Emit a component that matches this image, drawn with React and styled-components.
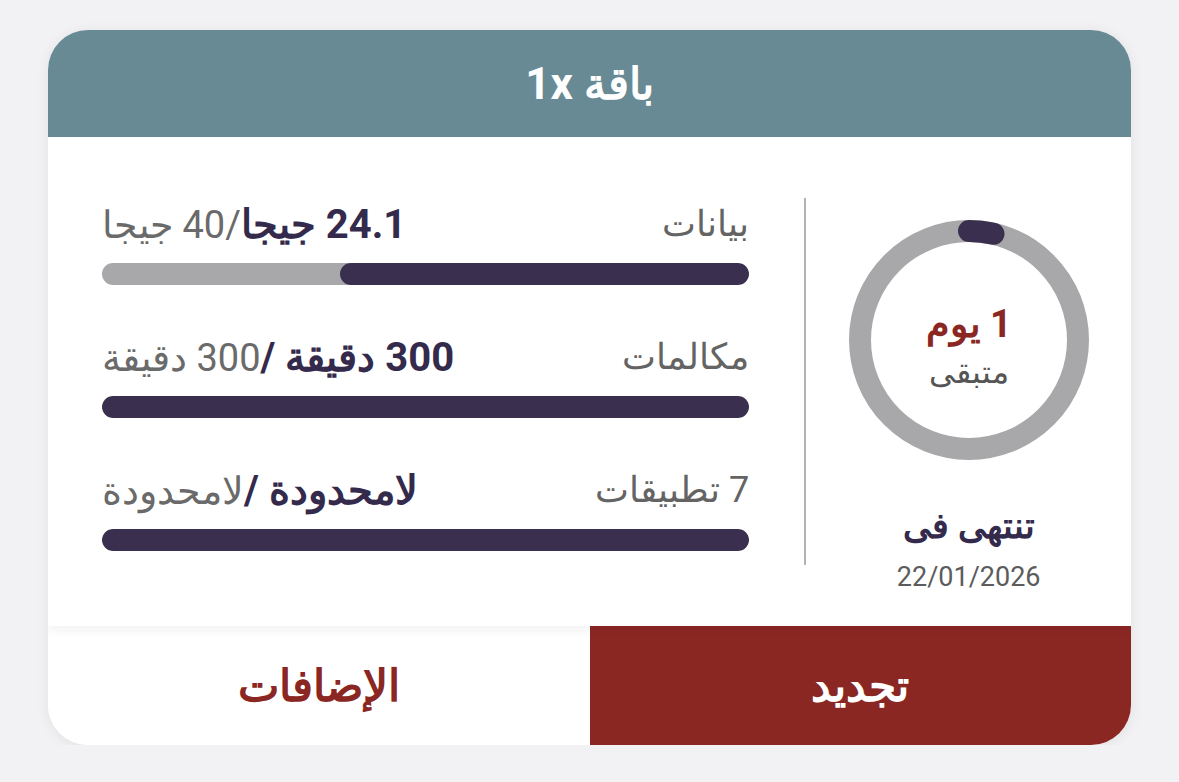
import React from 'react';
import styled, { createGlobalStyle } from 'styled-components';

const GlobalStyle = createGlobalStyle`
  body {
    margin: 0;
    background: #f2f2f5;
    font-family: "Roboto", sans-serif;
  }
`;

const Card = styled.div`
  margin: 30px 48px 0;
  width: 1083px;
  border-radius: 40px;
  overflow: hidden;
  background: #fff;
  box-shadow: 0 2px 14px rgba(0, 0, 0, 0.07);
`;

const Header = styled.div`
  height: 107px;
  background: #678a94;
  color: #fff;
  display: flex;
  align-items: center;
  justify-content: center;
  font-size: 44px;
  font-weight: 700;
`;

const Body = styled.div`
  position: relative;
  z-index: 1;
  height: 489px;
  box-sizing: border-box;
  padding: 61px 0 0 54px;
  display: flex;
  align-items: flex-start;
  background: #fff;
  box-shadow: 0 5px 10px rgba(0, 0, 0, 0.05);
`;

const Side = styled.div`
  width: 325px;
  display: flex;
  flex-direction: column;
  align-items: center;
  padding-top: 22px;
`;

const Divider = styled.div`
  width: 2px;
  height: 367px;
  background: #b3b3b3;
`;

const Usage = styled.div`
  width: 648px;
  margin-right: 55px;
  padding-top: 6px;
  display: flex;
  flex-direction: column;
  gap: 52px;
`;

const Row = styled.div`
  display: flex;
  flex-direction: column;
  gap: 19px;
`;

const RowText = styled.div`
  height: 40px;
  display: flex;
  align-items: center;
  justify-content: space-between;
  font-size: 36px;
  color: #646464;
  white-space: nowrap;
`;

const Amount = styled.span`
  color: #6a6a6a;
  font-size: 38px;
`;

const Strong = styled.b`
  color: #342a4c;
  font-weight: 700;
  font-size: 40px;
`;

const Track = styled.div`
  height: 22px;
  border-radius: 11px;
  background: #a8a8aa;
  display: flex;
  overflow: hidden;
`;

const Fill = styled.div`
  height: 100%;
  border-radius: 11px;
  background: #3b2f4f;
`;

const Ring = styled.div`
  display: grid;
  width: 240px;
  height: 240px;
  & > * {
    grid-area: 1 / 1;
  }
`;

const RingLabel = styled.div`
  display: flex;
  flex-direction: column;
  align-items: center;
  justify-content: center;
  padding-top: 14px;
`;

const Days = styled.div`
  color: #8b2723;
  font-weight: 700;
  font-size: 38px;
  line-height: 50px;
`;

const Remain = styled.div`
  color: #555;
  font-size: 32px;
  line-height: 46px;
`;

const EndsLabel = styled.div`
  margin-top: 42px;
  color: #342a4c;
  font-weight: 700;
  font-size: 35px;
  line-height: 50px;
`;

const EndsDate = styled.div`
  margin-top: 7px;
  color: #5c5c5c;
  font-size: 27px;
  line-height: 36px;
  direction: ltr;
`;

const Actions = styled.div`
  display: flex;
  height: 119px;
`;

const Action = styled.button`
  flex: 1;
  border: none;
  margin: 0;
  font-family: inherit;
  font-size: 44px;
  font-weight: 700;
  cursor: pointer;
  background: ${(p) => (p.$primary ? '#8b2723' : '#fff')};
  color: ${(p) => (p.$primary ? '#fff' : '#8b2723')};
`;

const rows = [
  { label: 'بيانات', strong: '24.1 جيجا', rest: '/40 جيجا', pct: 63.3 },
  { label: 'مكالمات', strong: '300 دقيقة /', rest: '300 دقيقة', pct: 100 },
  { label: '7 تطبيقات', strong: 'لامحدودة /', rest: 'لامحدودة', pct: 100 },
];

function DaysRing() {
  return (
    <Ring>
      <svg width="240" height="240" viewBox="0 0 240 240">
        <circle cx="120" cy="120" r="109" fill="none" stroke="#a8a8aa" strokeWidth="22" />
        <path
          d="M120 11 A109 109 0 0 1 144.5 13.8"
          fill="none"
          stroke="#3b2f4f"
          strokeWidth="22"
          strokeLinecap="round"
        />
      </svg>
      <RingLabel>
        <Days>1 يوم</Days>
        <Remain>متبقى</Remain>
      </RingLabel>
    </Ring>
  );
}

export default function App() {
  return (
    <>
      <GlobalStyle />
      <Card dir="rtl">
        <Header>باقة 1x</Header>
        <Body>
          <Side>
            <DaysRing />
            <EndsLabel>تنتهى فى</EndsLabel>
            <EndsDate>22/01/2026</EndsDate>
          </Side>
          <Divider />
          <Usage>
            {rows.map((r) => (
              <Row key={r.label}>
                <RowText>
                  <span>{r.label}</span>
                  <Amount>
                    <Strong>{r.strong}</Strong>
                    {r.rest}
                  </Amount>
                </RowText>
                <Track>
                  <Fill style={{ width: `${r.pct}%` }} />
                </Track>
              </Row>
            ))}
          </Usage>
        </Body>
        <Actions>
          <Action $primary>تجديد</Action>
          <Action>الإضافات</Action>
        </Actions>
      </Card>
    </>
  );
}
